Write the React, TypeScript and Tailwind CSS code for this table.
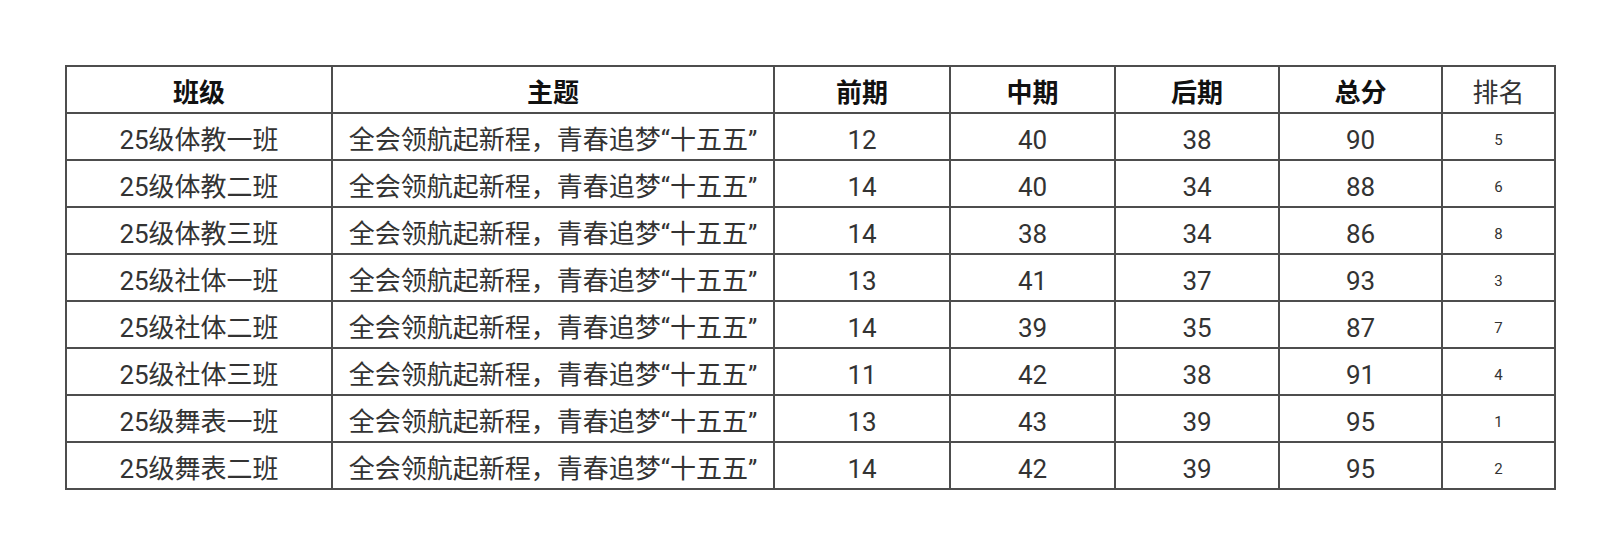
import React from "react";

type Row = {
  name: string;
  topic: string;
  early: number;
  mid: number;
  late: number;
  total: number;
  rank: number;
};

const topic = "全会领航起新程，青春追梦“十五五”";

const rows: Row[] = [
  { name: "25级体教一班", topic, early: 12, mid: 40, late: 38, total: 90, rank: 5 },
  { name: "25级体教二班", topic, early: 14, mid: 40, late: 34, total: 88, rank: 6 },
  { name: "25级体教三班", topic, early: 14, mid: 38, late: 34, total: 86, rank: 8 },
  { name: "25级社体一班", topic, early: 13, mid: 41, late: 37, total: 93, rank: 3 },
  { name: "25级社体二班", topic, early: 14, mid: 39, late: 35, total: 87, rank: 7 },
  { name: "25级社体三班", topic, early: 11, mid: 42, late: 38, total: 91, rank: 4 },
  { name: "25级舞表一班", topic, early: 13, mid: 43, late: 39, total: 95, rank: 1 },
  { name: "25级舞表二班", topic, early: 14, mid: 42, late: 39, total: 95, rank: 2 },
];

const cell = "border-2 border-[#4d4d4d] px-0 pb-0 pt-[7px] text-center align-middle";

export default function App(): React.JSX.Element {
  return (
    <div
      className="h-[556px] w-full bg-white pt-[65px]"
      style={{ fontFamily: 'Roboto, "Noto Sans CJK SC", sans-serif' }}
    >
      <table className="ml-[65px] w-[1489px] table-fixed border-collapse">
        <colgroup>
          <col className="w-[266px]" />
          <col className="w-[442px]" />
          <col className="w-[176px]" />
          <col className="w-[165px]" />
          <col className="w-[164px]" />
          <col className="w-[163px]" />
          <col className="w-[113px]" />
        </colgroup>
        <thead>
          <tr className="h-[47px] text-[26px] leading-none text-[#111]">
            <th className={`${cell} font-bold`}>班级</th>
            <th className={`${cell} font-bold`}>主题</th>
            <th className={`${cell} font-bold`}>前期</th>
            <th className={`${cell} font-bold`}>中期</th>
            <th className={`${cell} font-bold`}>后期</th>
            <th className={`${cell} font-bold`}>总分</th>
            <th className={`${cell} font-normal text-[#333]`}>排名</th>
          </tr>
        </thead>
        <tbody>
          {rows.map((r, i) => (
            <tr key={i} className="h-[47px] text-[26px] leading-none text-[#333]">
              <td className={cell}>{r.name}</td>
              <td className={cell}>{r.topic}</td>
              <td className={cell}>{r.early}</td>
              <td className={cell}>{r.mid}</td>
              <td className={cell}>{r.late}</td>
              <td className={cell}>{r.total}</td>
              <td className={`${cell} text-[15px]`}>{r.rank}</td>
            </tr>
          ))}
        </tbody>
      </table>
    </div>
  );
}
